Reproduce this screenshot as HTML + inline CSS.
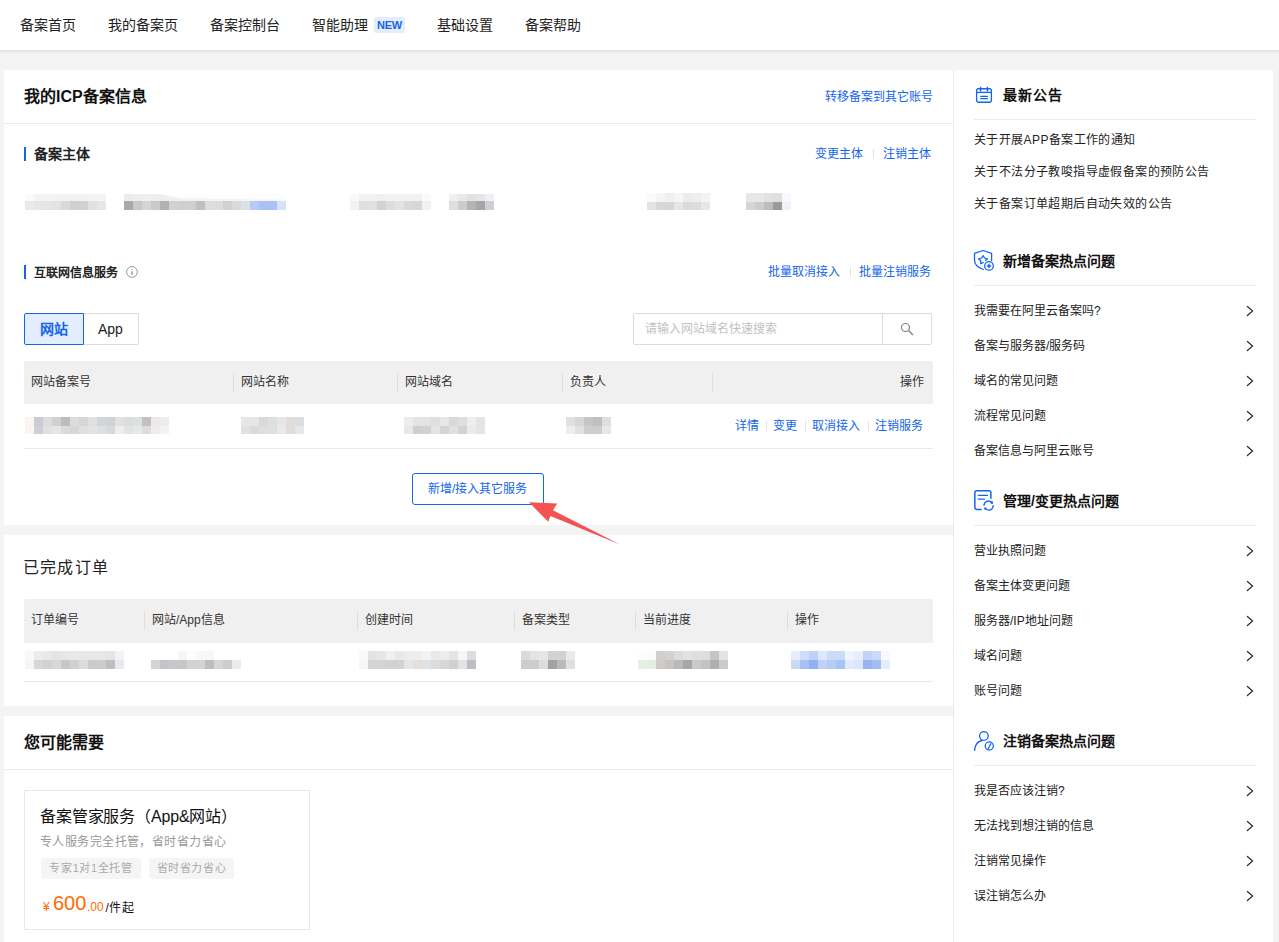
<!DOCTYPE html>
<html lang="zh-CN">
<head>
<meta charset="utf-8">
<title>ICP备案</title>
<style>
*{box-sizing:border-box;margin:0;padding:0}
html,body{width:1279px;height:942px;overflow:hidden}
body{background:#f4f4f4;font-family:"Liberation Sans",sans-serif;font-size:12px;color:#333;position:relative}
.t{position:absolute;white-space:nowrap;line-height:1;font-size:12px}
.b{font-weight:bold}
.lk{color:#1366ec}
.r{text-align:right}
#nav{position:absolute;left:0;top:0;width:1279px;height:50px;background:#fff}
#nav:before{content:"";position:absolute;left:-12px;right:-12px;top:0;bottom:0;box-shadow:0 1px 4px rgba(0,0,0,.10)}
#nav .t{font-size:14px;top:18px;color:#222}
.card{position:absolute;background:#fff}
.hl{position:absolute;height:1px;background:#ebebeb}
.vb{position:absolute;width:2px;height:14px;background:#1366ec}
.th{position:absolute;background:#f0f0f0;border-radius:2px 2px 0 0}
.vd{position:absolute;width:1px;height:19px;background:#dedede}
.sp{position:absolute;width:1px;height:10px;background:#e3e3e3}
.px{position:absolute;filter:blur(.4px)}
.px i{display:block;width:100%}
.chev{position:absolute;width:8px;height:12px}
.si{font-size:12px;color:#222}
.st{font-size:14px;font-weight:bold;color:#111}
svg{position:absolute;overflow:visible}
</style>
</head>
<body>
<div id="nav">
<span class="t" style="left:20px">备案首页</span>
<span class="t" style="left:108px">我的备案页</span>
<span class="t" style="left:210px">备案控制台</span>
<span class="t" style="left:312px">智能助理</span>
<span class="t b" style="left:374px;top:17px;width:31px;height:16px;background:#e5edfd;color:#1366ec;font-size:11px;line-height:16px;text-align:center;border-radius:2px;letter-spacing:-.3px">NEW</span>
<span class="t" style="left:437px">基础设置</span>
<span class="t" style="left:525px">备案帮助</span>
</div>
<div class="card" style="left:4px;top:70px;width:949px;height:455px"></div>
<span class="t b" style="left:24px;top:89px;font-size:16px;color:#111">我的ICP备案信息</span>
<span class="t lk r" style="right:346px;top:91px">转移备案到其它账号</span>
<div class="hl" style="left:4px;top:123px;width:949px"></div>
<div class="vb" style="left:24px;top:147px"></div>
<span class="t b" style="left:34px;top:147px;font-size:14px;color:#222">备案主体</span>
<span class="t lk" style="left:815px;top:148px">变更主体</span><div class="sp" style="left:873px;top:149px"></div><span class="t lk" style="left:883px;top:148px">注销主体</span>
<div class="px" style="left:25px;top:194px;width:81px;height:16px;"><i style="height:7px;background:linear-gradient(90deg,#fbfbfb 0px,#fbfbfb 9px,#f4f4f4 9px,#f4f4f4 18px,#f3f3f3 18px,#f3f3f3 27px,#f3f3f3 27px,#f3f3f3 36px,#f2f2f2 36px,#f2f2f2 45px,#f1f1f1 45px,#f1f1f1 54px,#f2f2f2 54px,#f2f2f2 63px,#f3f3f3 63px,#f3f3f3 72px,#f4f4f4 72px,#f4f4f4 81px)"></i><i style="height:9px;background:linear-gradient(90deg,#e9e9e9 0px,#e9e9e9 9px,#e7e7e7 9px,#e7e7e7 18px,#e6e6e6 18px,#e6e6e6 27px,#e3e3e3 27px,#e3e3e3 36px,#dad8d8 36px,#dad8d8 45px,#d0d0d0 45px,#d0d0d0 54px,#d1d1d1 54px,#d1d1d1 63px,#e1e1e1 63px,#e1e1e1 72px,#e6e6e6 72px,#e6e6e6 81px)"></i></div>
<div class="px" style="left:124px;top:194px;width:162px;height:16px;"><i style="height:7px;background:linear-gradient(90deg,#ececec 0px,#ececec 9px,#eeeeee 9px,#eeeeee 18px,#f0f0f0 18px,#f0f0f0 27px,#fafafa 27px,#fafafa 36px,#fdfdfd 36px,#fdfdfd 45px,#fdfdfd 45px,#fdfdfd 54px,#fdfdfd 54px,#fdfdfd 63px,#fdfdfd 63px,#fdfdfd 72px,#fdfdfd 72px,#fdfdfd 81px,#fdfdfd 81px,#fdfdfd 90px,#fdfdfd 90px,#fdfdfd 99px,#fdfdfd 99px,#fdfdfd 108px,#fdfdfd 108px,#fdfdfd 117px,#fdfdfd 117px,#fdfdfd 126px,#fdfdfd 126px,#fdfdfd 135px,#fdfdfd 135px,#fdfdfd 144px,#fdfdfd 144px,#fdfdfd 153px,#fdfdfd 153px,#fdfdfd 162px)"></i><i style="height:9px;background:linear-gradient(90deg,#aaa8a8 0px,#aaa8a8 9px,#c9c9c9 9px,#c9c9c9 18px,#d5d5d5 18px,#d5d5d5 27px,#ccc9c7 27px,#ccc9c7 36px,#b1b1b3 36px,#b1b1b3 45px,#d1d1d1 45px,#d1d1d1 54px,#cfcfcf 54px,#cfcfcf 63px,#d2cfcc 63px,#d2cfcc 72px,#c0c0c1 72px,#c0c0c1 81px,#dddddd 81px,#dddddd 90px,#dedbd9 90px,#dedbd9 99px,#d2d1d0 99px,#d2d1d0 108px,#d9d9d9 108px,#d9d9d9 117px,#dde0e5 117px,#dde0e5 126px,#b6caf6 126px,#b6caf6 135px,#a9c1f5 135px,#a9c1f5 144px,#aac2f5 144px,#aac2f5 153px,#d6e3fb 153px,#d6e3fb 162px)"></i></div>
<div style="position:absolute;left:151px;top:194px;width:135px;height:7px;background:linear-gradient(90deg,#ededed,#f3f3f3 40%,#f8f8f8);clip-path:polygon(0 0,8px 0,30px 4.5px,100% 5.5px,100% 100%,0 100%);filter:blur(.4px)"></div>
<div class="px" style="left:350px;top:194px;width:81px;height:16px;"><i style="height:7px;background:linear-gradient(90deg,#f8f8f8 0px,#f8f8f8 9px,#f1f1f1 9px,#f1f1f1 18px,#f1f1f1 18px,#f1f1f1 27px,#f0f0ef 27px,#f0f0ef 36px,#f2f2f2 36px,#f2f2f2 45px,#f2f2f2 45px,#f2f2f2 54px,#f1f1f1 54px,#f1f1f1 63px,#f1f1f1 63px,#f1f1f1 72px,#fafafa 72px,#fafafa 81px)"></i><i style="height:9px;background:linear-gradient(90deg,#f2f2f1 0px,#f2f2f1 9px,#dfdfdf 9px,#dfdfdf 18px,#e0e1e1 18px,#e0e1e1 27px,#d3d2d1 27px,#d3d2d1 36px,#dcdddd 36px,#dcdddd 45px,#e2e3e3 45px,#e2e3e3 54px,#d9d9d9 54px,#d9d9d9 63px,#d9d7d6 63px,#d9d7d6 72px,#eef2f5 72px,#eef2f5 81px)"></i></div>
<div class="px" style="left:449px;top:194px;width:45px;height:16px;"><i style="height:7px;background:linear-gradient(90deg,#efefee 0px,#efefee 9px,#e9e9e9 9px,#e9e9e9 18px,#e2e2e2 18px,#e2e2e2 27px,#e6e6e6 27px,#e6e6e6 36px,#eef0f3 36px,#eef0f3 45px)"></i><i style="height:9px;background:linear-gradient(90deg,#e0dfdd 0px,#e0dfdd 9px,#cecccb 9px,#cecccb 18px,#b4b4b4 18px,#b4b4b4 27px,#a8a6a5 27px,#a8a6a5 36px,#cdd1d6 36px,#cdd1d6 45px)"></i></div>
<div class="px" style="left:647px;top:193px;width:63px;height:17px;"><i style="height:8.5px;background:linear-gradient(90deg,#fafafa 0px,#fafafa 9px,#f5f5f5 9px,#f5f5f5 18px,#f0f0f0 18px,#f0f0f0 27px,#f6f6f6 27px,#f6f6f6 36px,#edecec 36px,#edecec 45px,#eeeeee 45px,#eeeeee 54px,#f3f3f5 54px,#f3f3f5 63px)"></i><i style="height:8.5px;background:linear-gradient(90deg,#e5e3e3 0px,#e5e3e3 9px,#d8d8d8 9px,#d8d8d8 18px,#d6d6d6 18px,#d6d6d6 27px,#e6e6e6 27px,#e6e6e6 36px,#dddbd9 36px,#dddbd9 45px,#dedcdb 45px,#dedcdb 54px,#e7e7e7 54px,#e7e7e7 63px)"></i></div>
<div class="px" style="left:746px;top:193px;width:45px;height:17px;"><i style="height:8.5px;background:linear-gradient(90deg,#e9e7e6 0px,#e9e7e6 9px,#e9e7e6 9px,#e9e7e6 18px,#e1e1e1 18px,#e1e1e1 27px,#dfdfdf 27px,#dfdfdf 36px,#f8f9fb 36px,#f8f9fb 45px)"></i><i style="height:8.5px;background:linear-gradient(90deg,#d8d4d2 0px,#d8d4d2 9px,#cdcdcd 9px,#cdcdcd 18px,#bcbcbc 18px,#bcbcbc 27px,#9c9a99 27px,#9c9a99 36px,#eef1f8 36px,#eef1f8 45px)"></i></div>
<div class="vb" style="left:24px;top:265px"></div>
<span class="t b" style="left:34px;top:267px;color:#222">互联网信息服务</span>
<svg style="left:120px;top:260px" width="24" height="24" viewBox="0 0 24 24"><circle cx="11.95" cy="11.97" r="5.35" fill="none" stroke="#9a9a9a" stroke-width="1"/><rect x="11.2" y="11.2" width="1.6" height="3.7" fill="#a6a6a6"/><rect x="11.2" y="9" width="1.6" height="0.9" fill="#a6a6a6"/></svg>
<span class="t lk" style="left:768px;top:266px">批量取消接入</span><div class="sp" style="left:850px;top:267px"></div><span class="t lk" style="left:859px;top:266px">批量注销服务</span>
<div style="position:absolute;left:84px;top:313px;width:55px;height:32px;border:1px solid #dcdcdc;border-left:none;border-radius:0 2px 2px 0"></div>
<div style="position:absolute;left:24px;top:313px;width:60px;height:32px;border:1px solid #1366ec;background:#e3edfd;border-radius:2px 0 0 2px"></div>
<span class="t b" style="left:40px;top:322px;font-size:14px;color:#1366ec">网站</span>
<span class="t" style="left:98px;top:322px;font-size:14px;color:#222">App</span>
<div style="position:absolute;left:633px;top:313px;width:299px;height:32px;border:1px solid #dcdcdc;border-radius:2px;background:#fff"></div>
<div style="position:absolute;left:882px;top:313px;width:1px;height:32px;background:#dcdcdc"></div>
<span class="t" style="left:645px;top:323px;color:#c1c1c1">请输入网站域名快速搜索</span>
<svg style="left:892px;top:318px" width="30" height="22" viewBox="0 0 30 22"><circle cx="13.5" cy="9.5" r="4" fill="none" stroke="#808080" stroke-width="1.15"/><path d="M16.6 12.6L20.9 16.9" stroke="#808080" stroke-width="1.35" fill="none"/></svg>
<div class="th" style="left:24px;top:361px;width:909px;height:43px"></div>
<span class="t" style="left:31px;top:376px;color:#333">网站备案号</span>
<span class="t" style="left:241px;top:376px;color:#333">网站名称</span>
<span class="t" style="left:405px;top:376px;color:#333">网站域名</span>
<span class="t" style="left:570px;top:376px;color:#333">负责人</span>
<span class="t" style="left:900px;top:376px;color:#333">操作</span>
<div class="vd" style="left:233px;top:373px"></div>
<div class="vd" style="left:397px;top:373px"></div>
<div class="vd" style="left:562px;top:373px"></div>
<div class="vd" style="left:712px;top:373px"></div>
<div class="px" style="left:25px;top:417px;width:144px;height:17px;"><i style="height:8.5px;background:linear-gradient(90deg,#f8f5f3 0px,#f8f5f3 9px,#c9cdd2 9px,#c9cdd2 18px,#dcdcdc 18px,#dcdcdc 27px,#d1d0cf 27px,#d1d0cf 36px,#bcbcbc 36px,#bcbcbc 45px,#dcdcdc 45px,#dcdcdc 54px,#d8d6d5 54px,#d8d6d5 63px,#e0e0e0 63px,#e0e0e0 72px,#d4d5d7 72px,#d4d5d7 81px,#d2d3d5 81px,#d2d3d5 90px,#e3e1e1 90px,#e3e1e1 99px,#dcdddd 99px,#dcdddd 108px,#dde0e3 108px,#dde0e3 117px,#c4c0be 117px,#c4c0be 126px,#eaeaea 126px,#eaeaea 135px,#ebecee 135px,#ebecee 144px)"></i><i style="height:8.5px;background:linear-gradient(90deg,#faf5f2 0px,#faf5f2 9px,#cdd1d6 9px,#cdd1d6 18px,#e0e0e0 18px,#e0e0e0 27px,#e5e5e5 27px,#e5e5e5 36px,#dedad8 36px,#dedad8 45px,#d5d6d8 45px,#d5d6d8 54px,#dfdfdf 54px,#dfdfdf 63px,#e3e3e3 63px,#e3e3e3 72px,#dedfe0 72px,#dedfe0 81px,#d8d9db 81px,#d8d9db 90px,#eeeeec 90px,#eeeeec 99px,#e2e3e4 99px,#e2e3e4 108px,#e6e8ea 108px,#e6e8ea 117px,#dedbda 117px,#dedbda 126px,#ececec 126px,#ececec 135px,#f3f3f3 135px,#f3f3f3 144px)"></i></div>
<div class="px" style="left:241px;top:417px;width:63px;height:17px;"><i style="height:8.5px;background:linear-gradient(90deg,#e9e7e6 0px,#e9e7e6 9px,#e6e6e6 9px,#e6e6e6 18px,#d9d9d9 18px,#d9d9d9 27px,#dde0e3 27px,#dde0e3 36px,#e6e6e6 36px,#e6e6e6 45px,#e0dddc 45px,#e0dddc 54px,#dcdee1 54px,#dcdee1 63px)"></i><i style="height:8.5px;background:linear-gradient(90deg,#e3e1df 0px,#e3e1df 9px,#d9dadc 9px,#d9dadc 18px,#e0dedc 18px,#e0dedc 27px,#dddfe1 27px,#dddfe1 36px,#e9e9e9 36px,#e9e9e9 45px,#e0dcdb 45px,#e0dcdb 54px,#e6e7e9 54px,#e6e7e9 63px)"></i></div>
<div class="px" style="left:404px;top:417px;width:81px;height:17px;"><i style="height:8.5px;background:linear-gradient(90deg,#ededeb 0px,#ededeb 9px,#e4e4e4 9px,#e4e4e4 18px,#e3e3e3 18px,#e3e3e3 27px,#e0dfdf 27px,#e0dfdf 36px,#e6e7e9 36px,#e6e7e9 45px,#d8d8d8 45px,#d8d8d8 54px,#dfdfdf 54px,#dfdfdf 63px,#eeeeed 63px,#eeeeed 72px,#e2e5e5 72px,#e2e5e5 81px)"></i><i style="height:8.5px;background:linear-gradient(90deg,#e8e8e7 0px,#e8e8e7 9px,#cfcfcf 9px,#cfcfcf 18px,#d3d2d0 18px,#d3d2d0 27px,#e4e4e4 27px,#e4e4e4 36px,#d3d4d6 36px,#d3d4d6 45px,#e0e0e0 45px,#e0e0e0 54px,#d3d3d3 54px,#d3d3d3 63px,#ebebe9 63px,#ebebe9 72px,#e3e5e6 72px,#e3e5e6 81px)"></i></div>
<div class="px" style="left:566px;top:417px;width:45px;height:17px;"><i style="height:8.5px;background:linear-gradient(90deg,#e3e1df 0px,#e3e1df 9px,#d7d7d7 9px,#d7d7d7 18px,#c6c6c6 18px,#c6c6c6 27px,#bfbfbf 27px,#bfbfbf 36px,#dde0e3 36px,#dde0e3 45px)"></i><i style="height:8.5px;background:linear-gradient(90deg,#efeeec 0px,#efeeec 9px,#e3e1df 9px,#e3e1df 18px,#cecece 18px,#cecece 27px,#cdcdcd 27px,#cdcdcd 36px,#e6e7e9 36px,#e6e7e9 45px)"></i></div>
<span class="t lk" style="left:735px;top:420px">详情</span><div class="sp" style="left:766px;top:421px"></div><span class="t lk" style="left:773px;top:420px">变更</span><div class="sp" style="left:805px;top:421px"></div><span class="t lk" style="left:812px;top:420px">取消接入</span><div class="sp" style="left:868px;top:421px"></div><span class="t lk" style="left:875px;top:420px">注销服务</span>
<div class="hl" style="left:24px;top:448px;width:909px;background:#e9e9e9"></div>
<div style="position:absolute;left:412px;top:473px;width:132px;height:32px;border:1px solid #1366ec;border-radius:3px;background:#fff"></div>
<span class="t lk" style="left:428px;top:483px">新增/接入其它服务</span>
<div class="card" style="left:4px;top:535px;width:949px;height:171px"></div>
<span class="t" style="left:23px;top:560px;font-size:16px;letter-spacing:1.2px;color:#222">已完成订单</span>
<div class="th" style="left:24px;top:599px;width:909px;height:44px"></div>
<span class="t" style="left:31px;top:614px;color:#333">订单编号</span>
<span class="t" style="left:152px;top:614px;color:#333">网站/App信息</span>
<span class="t" style="left:365px;top:614px;color:#333">创建时间</span>
<span class="t" style="left:522px;top:614px;color:#333">备案类型</span>
<span class="t" style="left:643px;top:614px;color:#333">当前进度</span>
<span class="t" style="left:795px;top:614px;color:#333">操作</span>
<div class="vd" style="left:144px;top:611px"></div>
<div class="vd" style="left:357px;top:611px"></div>
<div class="vd" style="left:514px;top:611px"></div>
<div class="vd" style="left:635px;top:611px"></div>
<div class="vd" style="left:787px;top:611px"></div>
<div class="px" style="left:25px;top:651px;width:99px;height:18px;"><i style="height:9.0px;background:linear-gradient(90deg,#f9f8f7 0px,#f9f8f7 9px,#ececec 9px,#ececec 18px,#e9e9ea 18px,#e9e9ea 27px,#e6e4e3 27px,#e6e4e3 36px,#e9e7e6 36px,#e9e7e6 45px,#e8e9eb 45px,#e8e9eb 54px,#e8e6e6 54px,#e8e6e6 63px,#eae8e7 63px,#eae8e7 72px,#e7e7e7 72px,#e7e7e7 81px,#e6e5e5 81px,#e6e5e5 90px,#f2f3f5 90px,#f2f3f5 99px)"></i><i style="height:9.0px;background:linear-gradient(90deg,#f6f5f3 0px,#f6f5f3 9px,#d9d7d6 9px,#d9d7d6 18px,#d0d2d5 18px,#d0d2d5 27px,#dad8d7 27px,#dad8d7 36px,#c7c7c7 36px,#c7c7c7 45px,#cfd2d3 45px,#cfd2d3 54px,#dedcdb 54px,#dedcdb 63px,#cacaca 63px,#cacaca 72px,#cecccb 72px,#cecccb 81px,#bfbfc1 81px,#bfbfc1 90px,#e7e9ec 90px,#e7e9ec 99px)"></i></div>
<div class="px" style="left:151px;top:651px;width:90px;height:18px;"><i style="height:9.0px;background:linear-gradient(90deg,#ffffff 0px,#ffffff 9px,#ffffff 9px,#ffffff 18px,#ffffff 18px,#ffffff 27px,#f7f5f5 27px,#f7f5f5 36px,#fdfdfd 36px,#fdfdfd 45px,#f9f7f7 45px,#f9f7f7 54px,#f7f7f7 54px,#f7f7f7 63px,#ffffff 63px,#ffffff 72px,#ffffff 72px,#ffffff 81px,#ffffff 81px,#ffffff 90px)"></i><i style="height:9.0px;background:linear-gradient(90deg,#d7d3d0 0px,#d7d3d0 9px,#c3c5ca 9px,#c3c5ca 18px,#c9c8c8 18px,#c9c8c8 27px,#c7c5ca 27px,#c7c5ca 36px,#d2d3d3 36px,#d2d3d3 45px,#d3d3d3 45px,#d3d3d3 54px,#bebcbe 54px,#bebcbe 63px,#d8d6d5 63px,#d8d6d5 72px,#cdcdcd 72px,#cdcdcd 81px,#e9ebee 81px,#e9ebee 90px)"></i></div>
<div class="px" style="left:359px;top:651px;width:117px;height:18px;"><i style="height:9.0px;background:linear-gradient(90deg,#fbf9f8 0px,#fbf9f8 9px,#e3e3e3 9px,#e3e3e3 18px,#e6e7e8 18px,#e6e7e8 27px,#f0f0f0 27px,#f0f0f0 36px,#eae8e6 36px,#eae8e6 45px,#ededed 45px,#ededed 54px,#f0eeec 54px,#f0eeec 63px,#f2f4f5 63px,#f2f4f5 72px,#e9e9e9 72px,#e9e9e9 81px,#ececec 81px,#ececec 90px,#e6e4e3 90px,#e6e4e3 99px,#f6f6f4 99px,#f6f6f4 108px,#dcdde1 108px,#dcdde1 117px)"></i><i style="height:9.0px;background:linear-gradient(90deg,#f8f5f4 0px,#f8f5f4 9px,#d5d5d5 9px,#d5d5d5 18px,#d2d4d6 18px,#d2d4d6 27px,#d2d2d2 27px,#d2d2d2 36px,#d4d2d2 36px,#d4d2d2 45px,#e6e6e6 45px,#e6e6e6 54px,#e3dfdc 54px,#e3dfdc 63px,#dde2e6 63px,#dde2e6 72px,#dcdcdc 72px,#dcdcdc 81px,#d9d7d7 81px,#d9d7d7 90px,#d2d0cf 90px,#d2d0cf 99px,#e2e2e2 99px,#e2e2e2 108px,#bebec2 108px,#bebec2 117px)"></i></div>
<div class="px" style="left:521px;top:651px;width:54px;height:18px;"><i style="height:9.0px;background:linear-gradient(90deg,#dcd9d7 0px,#dcd9d7 9px,#e2e3e5 9px,#e2e3e5 18px,#e6e6e6 18px,#e6e6e6 27px,#d2d2d2 27px,#d2d2d2 36px,#d4d2d1 36px,#d4d2d1 45px,#e9eaec 45px,#e9eaec 54px)"></i><i style="height:9.0px;background:linear-gradient(90deg,#cfcccb 0px,#cfcccb 9px,#cccdd1 9px,#cccdd1 18px,#dddddd 18px,#dddddd 27px,#a3a1a4 27px,#a3a1a4 36px,#bcbab9 36px,#bcbab9 45px,#dfe0e3 45px,#dfe0e3 54px)"></i></div>
<div class="px" style="left:638px;top:651px;width:90px;height:18px;"><i style="height:9.0px;background:linear-gradient(90deg,#fdfdfb 0px,#fdfdfb 9px,#fbfbfb 9px,#fbfbfb 18px,#d2cecb 18px,#d2cecb 27px,#d2d2d2 27px,#d2d2d2 36px,#dcdcdc 36px,#dcdcdc 45px,#e2e2e2 45px,#e2e2e2 54px,#dedede 54px,#dedede 63px,#e0dedd 63px,#e0dedd 72px,#c6c6c6 72px,#c6c6c6 81px,#e3e3e3 81px,#e3e3e3 90px)"></i><i style="height:9.0px;background:linear-gradient(90deg,#e3f1e0 0px,#e3f1e0 9px,#e2f0df 9px,#e2f0df 18px,#cfcbc8 18px,#cfcbc8 27px,#c5c5c5 27px,#c5c5c5 36px,#b9bbbb 36px,#b9bbbb 45px,#a8a6a8 45px,#a8a6a8 54px,#cbcac7 54px,#cbcac7 63px,#c5c3c1 63px,#c5c3c1 72px,#adafb0 72px,#adafb0 81px,#cbcacb 81px,#cbcacb 90px)"></i></div>
<div class="px" style="left:791px;top:651px;width:99px;height:18px;"><i style="height:9.0px;background:linear-gradient(90deg,#e6edfc 0px,#e6edfc 9px,#cfdcfa 9px,#cfdcfa 18px,#bfd1f8 18px,#bfd1f8 27px,#dfe8fb 27px,#dfe8fb 36px,#ccdaf9 36px,#ccdaf9 45px,#ccdaf9 45px,#ccdaf9 54px,#f1f4fd 54px,#f1f4fd 63px,#e9eefc 63px,#e9eefc 72px,#c2d2f8 72px,#c2d2f8 81px,#ccdaf9 81px,#ccdaf9 90px,#f7f9fe 90px,#f7f9fe 99px)"></i><i style="height:9.0px;background:linear-gradient(90deg,#cbd9f8 0px,#cbd9f8 9px,#a8c0f4 9px,#a8c0f4 18px,#92b0f2 18px,#92b0f2 27px,#c0d0f6 27px,#c0d0f6 36px,#b8cbf5 36px,#b8cbf5 45px,#a5c5f6 45px,#a5c5f6 54px,#e3eafc 54px,#e3eafc 63px,#dfe6fb 63px,#dfe6fb 72px,#98b3f1 72px,#98b3f1 81px,#a3bcf3 81px,#a3bcf3 90px,#e6edfd 90px,#e6edfd 99px)"></i></div>
<div class="hl" style="left:24px;top:681px;width:909px;background:#e9e9e9"></div>
<div class="card" style="left:4px;top:716px;width:949px;height:240px"></div>
<span class="t b" style="left:24px;top:735px;font-size:16px;color:#111">您可能需要</span>
<div class="hl" style="left:4px;top:769px;width:949px"></div>
<div style="position:absolute;left:24px;top:790px;width:286px;height:140px;border:1px solid #e8e8e8;background:#fff"></div>
<span class="t" style="left:40px;top:809px;font-size:16px;color:#111;letter-spacing:-.15px">备案管家服务（App&amp;网站）</span>
<span class="t" style="left:40px;top:836px;color:#999;letter-spacing:.43px">专人服务完全托管，省时省力省心</span>
<span class="t" style="left:41px;top:858px;width:100px;height:21px;line-height:21px;background:#f5f5f5;border-radius:3px;text-align:center;color:#aaa;font-size:11px;letter-spacing:.6px">专家1对1全托管</span>
<span class="t" style="left:149px;top:858px;width:85px;height:21px;line-height:21px;background:#f5f5f5;border-radius:3px;text-align:center;color:#aaa;font-size:11px;letter-spacing:.6px">省时省力省心</span>
<span class="t" style="left:43px;top:901px;color:#ff6a00">¥</span>
<span class="t" style="left:53px;top:893px;font-size:20px;color:#ff6a00">600</span>
<span class="t" style="left:87px;top:901px;color:#ff6a00">.00</span>
<span class="t" style="left:105.5px;top:902px;color:#111;letter-spacing:.6px">/件起</span>
<div class="card" style="left:953px;top:70px;width:320px;height:880px;border-left:1px solid #ebebeb"></div>
<svg style="left:968px;top:80px" width="40" height="30" viewBox="0 0 40 30"><rect x="8.6" y="8.75" width="14.8" height="13.5" rx="1.9" stroke="#1366ec" fill="none" stroke-width="1.3"/><path d="M8.6 12.4H23.4" stroke="#1366ec" fill="none" stroke-width="1.3"/><path d="M12.6 7.4V11M19.4 7.4V11" stroke="#1366ec" fill="none" stroke-width="1.5" stroke-linecap="round"/><path d="M12.7 16.4H19.5M12.7 18.6H19.5" stroke="#1366ec" fill="none" stroke-width="1.15" stroke-linecap="round"/></svg>
<span class="t st" style="left:1003px;top:88px;letter-spacing:1px;">最新公告</span>
<div class="hl" style="left:974px;top:119px;width:282px"></div>
<span class="t si" style="left:974px;top:134px;letter-spacing:.4px;">关于开展APP备案工作的通知</span>
<span class="t si" style="left:974px;top:166px;letter-spacing:.4px;">关于不法分子教唆指导虚假备案的预防公告</span>
<span class="t si" style="left:974px;top:198px;letter-spacing:.4px;">关于备案订单超期后自动失效的公告</span>
<svg style="left:968px;top:245px" width="40" height="30" viewBox="0 0 40 30"><path d="M23.6 15.4V8.4L15.1 5.5L6.5 8.4V15C6.5 20 10.5 23 15.4 24.5" stroke="#1366ec" fill="none" stroke-width="1.3" stroke-linecap="round" stroke-linejoin="round"/><path d="M17.5 15.3L19.4 13.9L16.6 13L15.1 10.7L13.6 13L10.6 13.9L12.8 15.8L12.6 18.7L15.3 17.5" stroke="#1366ec" fill="none" stroke-width="1.3" stroke-linecap="round" stroke-linejoin="round"/><circle cx="21" cy="20.9" r="4.3" stroke="#1366ec" fill="none" stroke-width="1.3"/><path d="M21 19.3V22.5M19.4 20.9H22.6" stroke="#1366ec" fill="none" stroke-width="1.5" stroke-linecap="round"/></svg>
<span class="t st" style="left:1003px;top:254px;">新增备案热点问题</span>
<div class="hl" style="left:974px;top:285px;width:282px"></div>
<span class="t si" style="left:974px;top:305px;">我需要在阿里云备案吗?</span>
<svg style="left:1240px;top:301px" width="20" height="20" viewBox="0 0 20 20"><path d="M7.4 5.45L12.6 10L7.4 14.55" fill="none" stroke="#262626" stroke-width="1.15" stroke-linecap="round"/></svg>
<span class="t si" style="left:974px;top:340px;">备案与服务器/服务码</span>
<svg style="left:1240px;top:336px" width="20" height="20" viewBox="0 0 20 20"><path d="M7.4 5.45L12.6 10L7.4 14.55" fill="none" stroke="#262626" stroke-width="1.15" stroke-linecap="round"/></svg>
<span class="t si" style="left:974px;top:375px;">域名的常见问题</span>
<svg style="left:1240px;top:371px" width="20" height="20" viewBox="0 0 20 20"><path d="M7.4 5.45L12.6 10L7.4 14.55" fill="none" stroke="#262626" stroke-width="1.15" stroke-linecap="round"/></svg>
<span class="t si" style="left:974px;top:410px;">流程常见问题</span>
<svg style="left:1240px;top:406px" width="20" height="20" viewBox="0 0 20 20"><path d="M7.4 5.45L12.6 10L7.4 14.55" fill="none" stroke="#262626" stroke-width="1.15" stroke-linecap="round"/></svg>
<span class="t si" style="left:974px;top:445px;">备案信息与阿里云账号</span>
<svg style="left:1240px;top:441px" width="20" height="20" viewBox="0 0 20 20"><path d="M7.4 5.45L12.6 10L7.4 14.55" fill="none" stroke="#262626" stroke-width="1.15" stroke-linecap="round"/></svg>
<svg style="left:968px;top:485px" width="40" height="30" viewBox="0 0 40 30"><path d="M13.1 24.5H9C7.8 24.5 6.85 23.6 6.85 22.4V7.8C6.85 6.6 7.8 5.7 9 5.7H20.8C22 5.7 22.9 6.6 22.9 7.8V13.2" stroke="#1366ec" fill="none" stroke-width="1.5" stroke-linecap="round"/><path d="M10.3 10.35H19.5M10.3 14.2H16.4" stroke="#1366ec" fill="none" stroke-width="1.3" stroke-linecap="round"/><path d="M16 20.2A4.4 4.4 0 0 1 23.6 17.4M25.2 20.6A4.4 4.4 0 0 1 17.5 23.6" stroke="#1366ec" fill="none" stroke-width="1.4" stroke-linecap="round"/><path d="M22.7 16.6H25V18.7H22.7ZM16.2 22.5H18.5V24.6H16.2Z" fill="#1366ec"/></svg>
<span class="t st" style="left:1003px;top:494px;">管理/变更热点问题</span>
<div class="hl" style="left:974px;top:525px;width:282px"></div>
<span class="t si" style="left:974px;top:545px;">营业执照问题</span>
<svg style="left:1240px;top:541px" width="20" height="20" viewBox="0 0 20 20"><path d="M7.4 5.45L12.6 10L7.4 14.55" fill="none" stroke="#262626" stroke-width="1.15" stroke-linecap="round"/></svg>
<span class="t si" style="left:974px;top:580px;">备案主体变更问题</span>
<svg style="left:1240px;top:576px" width="20" height="20" viewBox="0 0 20 20"><path d="M7.4 5.45L12.6 10L7.4 14.55" fill="none" stroke="#262626" stroke-width="1.15" stroke-linecap="round"/></svg>
<span class="t si" style="left:974px;top:615px;">服务器/IP地址问题</span>
<svg style="left:1240px;top:611px" width="20" height="20" viewBox="0 0 20 20"><path d="M7.4 5.45L12.6 10L7.4 14.55" fill="none" stroke="#262626" stroke-width="1.15" stroke-linecap="round"/></svg>
<span class="t si" style="left:974px;top:650px;">域名问题</span>
<svg style="left:1240px;top:646px" width="20" height="20" viewBox="0 0 20 20"><path d="M7.4 5.45L12.6 10L7.4 14.55" fill="none" stroke="#262626" stroke-width="1.15" stroke-linecap="round"/></svg>
<span class="t si" style="left:974px;top:685px;">账号问题</span>
<svg style="left:1240px;top:681px" width="20" height="20" viewBox="0 0 20 20"><path d="M7.4 5.45L12.6 10L7.4 14.55" fill="none" stroke="#262626" stroke-width="1.15" stroke-linecap="round"/></svg>
<svg style="left:968px;top:725px" width="40" height="30" viewBox="0 0 40 30"><circle cx="15.9" cy="11" r="4.3" stroke="#1366ec" fill="none" stroke-width="1.3"/><path d="M6.6 25.4C6.8 20.6 9.6 16.6 13.9 15.5" stroke="#1366ec" fill="none" stroke-width="1.3" stroke-linecap="round"/><circle cx="21.3" cy="21" r="4.05" stroke="#1366ec" fill="none" stroke-width="1.3"/><path d="M23.1 18.2L19.9 24.2" stroke="#1366ec" fill="none" stroke-width="1.3"/></svg>
<span class="t st" style="left:1003px;top:734px;">注销备案热点问题</span>
<div class="hl" style="left:974px;top:765px;width:282px"></div>
<span class="t si" style="left:974px;top:785px;">我是否应该注销?</span>
<svg style="left:1240px;top:781px" width="20" height="20" viewBox="0 0 20 20"><path d="M7.4 5.45L12.6 10L7.4 14.55" fill="none" stroke="#262626" stroke-width="1.15" stroke-linecap="round"/></svg>
<span class="t si" style="left:974px;top:820px;">无法找到想注销的信息</span>
<svg style="left:1240px;top:816px" width="20" height="20" viewBox="0 0 20 20"><path d="M7.4 5.45L12.6 10L7.4 14.55" fill="none" stroke="#262626" stroke-width="1.15" stroke-linecap="round"/></svg>
<span class="t si" style="left:974px;top:855px;">注销常见操作</span>
<svg style="left:1240px;top:851px" width="20" height="20" viewBox="0 0 20 20"><path d="M7.4 5.45L12.6 10L7.4 14.55" fill="none" stroke="#262626" stroke-width="1.15" stroke-linecap="round"/></svg>
<span class="t si" style="left:974px;top:890px;">误注销怎么办</span>
<svg style="left:1240px;top:886px" width="20" height="20" viewBox="0 0 20 20"><path d="M7.4 5.45L12.6 10L7.4 14.55" fill="none" stroke="#262626" stroke-width="1.15" stroke-linecap="round"/></svg>
<svg style="left:0;top:0" width="1279" height="942" viewBox="0 0 1279 942"><path d="M529 502.2L557.2 503.4L553 510.2L620 544.4L550.4 516L548.2 521.8Z" fill="#f55252"/></svg>
</body>
</html>
